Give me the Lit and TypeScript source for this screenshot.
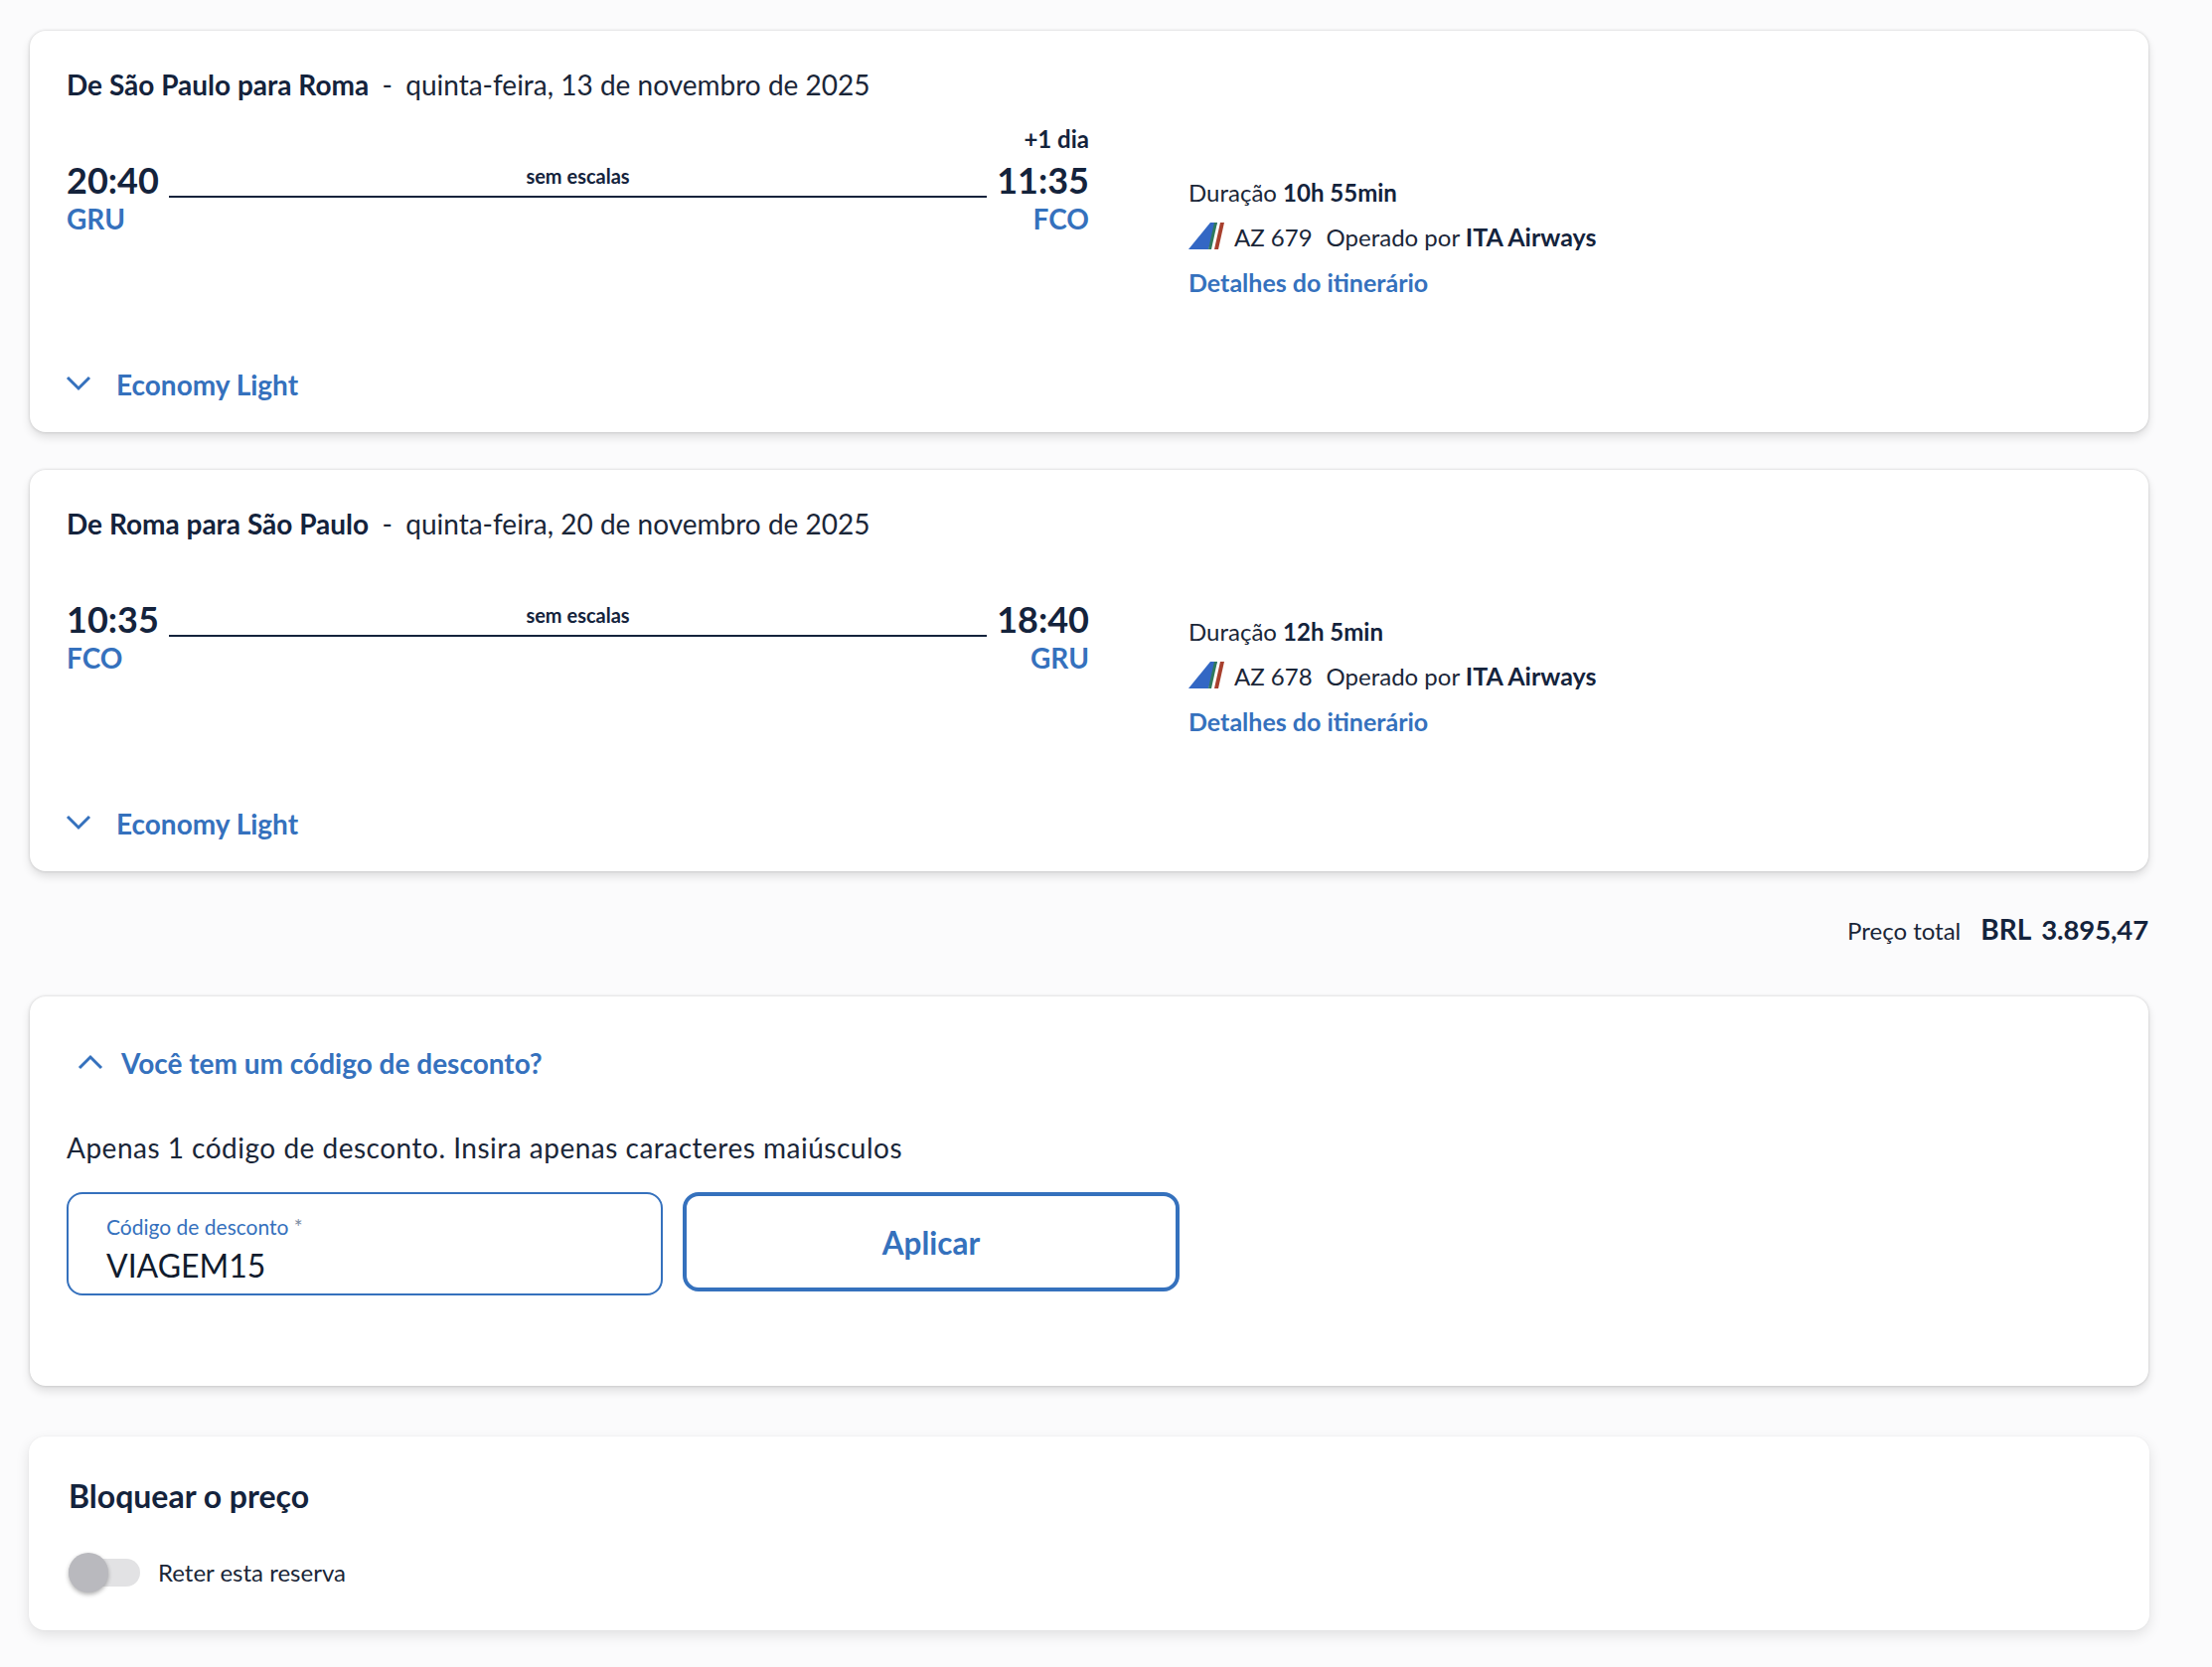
import { LitElement, html, css, svg } from "lit";
import { customElement } from "lit/decorators.js";

const tail = html`<svg class="tail" viewBox="0 0 36 28" width="36" height="28">
  <polygon points="0,28 22,1 29,1 20,28" fill="#3367c4"></polygon>
  <polygon points="20,28 26,1 29,1 23,28" fill="#2f7a5c"></polygon>
  <polygon points="26,28 32,1 36,1 30,28" fill="#a8402e"></polygon>
</svg>`;

const chevron = (up: boolean) => html`<svg class="chev" viewBox="0 0 26 16" width="26" height="16">
  ${svg`<polyline points=${up ? "2,14 13,3 24,14" : "2,2 13,13 24,2"} fill="none" stroke="#3571bd" stroke-width="3"></polyline>`}
</svg>`;

interface Leg {
  from: string; to: string; date: string; dep: string; arr: string; depCode: string; arrCode: string;
  plus?: string; dur: string; flight: string;
}

const legs: Leg[] = [
  { from: "São Paulo", to: "Roma", date: "quinta-feira, 13 de novembro de 2025", dep: "20:40", arr: "11:35", depCode: "GRU", arrCode: "FCO", plus: "+1 dia", dur: "10h 55min", flight: "AZ 679" },
  { from: "Roma", to: "São Paulo", date: "quinta-feira, 20 de novembro de 2025", dep: "10:35", arr: "18:40", depCode: "FCO", arrCode: "GRU", dur: "12h 5min", flight: "AZ 678" },
];

@customElement("app-root")
export class AppRoot extends LitElement {
  static styles = css`
    :host { display: block; min-height: 1678px; background: #fbfbfc; font-family: Lato, "Liberation Sans", sans-serif; color: #1a2638; box-sizing: border-box; padding: 31px 64px 0 30px; }
    * { box-sizing: border-box; }
    .card { background: #fff; border-radius: 16px; box-shadow: 0 0 3px rgba(0,0,0,.18), 0 5px 10px rgba(0,0,0,.12); }
    .leg { height: 404px; padding: 35px 37px 0; margin-bottom: 38px; display: flex; flex-direction: column; }
    .title { font-size: 28px; line-height: 38px; white-space: pre; }
    .title b { font-weight: 700; color: #14233c; }
    .title .sep { margin: 0 -1px; }
    .body { display: flex; margin-top: 21px; height: 225px; }
    .route { width: 1029px; }
    .plus { height: 34px; line-height: 30px; text-align: right; font-size: 24px; font-weight: 700; color: #14233c; }
    .times { display: flex; align-items: flex-end; height: 44px; }
    .time { font-size: 36px; font-weight: 700; line-height: 44px; color: #14233c; }
    .line { flex: 1; margin: 0 10px 4px; height: 40px; border-bottom: 2px solid #14233c; text-align: center; font-size: 20px; font-weight: 700; line-height: 37px; color: #14233c; }
    .codes { display: flex; justify-content: space-between; font-size: 28px; font-weight: 700; color: #3571bd; line-height: 36px; margin-top: -1px; }
    .info { margin-left: 100px; padding-top: 46px; font-size: 24px; line-height: 45px; }
    .info b { font-weight: 700; color: #14233c; }
    .flight { display: flex; align-items: center; white-space: pre; }
    .flight b { font-size: 25px; }
    .flight span { margin-right: 14px; }
    .tail { margin-right: 10px; margin-top: -4px; }
    .link { color: #3571bd; font-weight: 700; font-size: 25px; margin-top: 1px; }
    .fare { display: flex; align-items: center; margin-top: 18px; color: #3571bd; font-size: 28px; font-weight: 700; line-height: 38px; }
    .fare .chev { margin-left: -1px; margin-right: 25px; margin-top: -3px; }
    .total { display: flex; justify-content: flex-end; align-items: baseline; height: 91px; padding-top: 6px; margin-top: -3px; }
    .total .lbl { font-size: 24px; margin-right: 20px; }
    .total b { font-size: 28px; font-weight: 700; color: #14233c; display: flex; gap: 10px; align-items: baseline; }
    .total .num { letter-spacing: -.12px; font-size: 27.5px; }
    .promo { height: 392px; padding: 48px 37px 0; }
    .promo-head { display: flex; align-items: center; color: #3571bd; font-size: 28px; font-weight: 700; line-height: 38px; padding-left: 11px; }
    .promo-head .chev { margin-right: 18px; margin-top: -2px; }
    .hint { margin-top: 47px; font-size: 28px; line-height: 38px; letter-spacing: .5px; }
    .form { display: flex; gap: 20px; margin-top: 26px; align-items: flex-start; }
    .field { width: 600px; height: 104px; border: 2px solid #3571bd; border-radius: 16px; padding: 20px 38px 0; }
    .field label { display: block; font-size: 21px; line-height: 26px; color: #3571bd; }
    .field label i { font-style: normal; color: #7d8da3; }
    .field div { font-size: 32px; line-height: 44px; margin-top: 4px; color: #111c2e; }
    .apply { width: 500px; height: 100px; border: 4px solid #3571bd; border-radius: 16px; background: #fff; color: #3571bd; font: 700 31.5px Lato, sans-serif; padding: 2px 0 0; }
    .hold { height: 195px; margin: 51px -1px 0; padding: 38px 40px 0; box-shadow: 0 5px 14px rgba(0,0,0,.11), 0 0 2px rgba(0,0,0,.05); }
    .hold h2 { margin: 0; font-size: 32px; line-height: 44px; font-weight: 700; color: #14233c; }
    .toggle-row { display: flex; align-items: center; margin-top: 40px; }
    .toggle { position: relative; width: 72px; height: 28px; background: #e2e2e4; border-radius: 14px; margin-right: 18px; }
    .knob { position: absolute; left: 0; top: -6px; width: 40px; height: 40px; border-radius: 50%; background: #b9b9be; box-shadow: 0 2px 4px rgba(0,0,0,.3); }
    .toggle-row span { font-size: 24px; }
  `;

  private leg(l: Leg) {
    return html`<section class="card leg">
      <div class="title"><b>De ${l.from} para ${l.to}</b>  <span class="sep">-</span>  ${l.date}</div>
      <div class="body">
        <div class="route">
          <div class="plus">${l.plus ?? ""}</div>
          <div class="times"><span class="time">${l.dep}</span><div class="line">sem escalas</div><span class="time">${l.arr}</span></div>
          <div class="codes"><span>${l.depCode}</span><span>${l.arrCode}</span></div>
        </div>
        <div class="info">
          <div>Duração <b>${l.dur}</b></div>
          <div class="flight">${tail}<span>${l.flight}</span>Operado por <b>ITA Airways</b></div>
          <div class="link">Detalhes do itinerário</div>
        </div>
      </div>
      <div class="fare">${chevron(false)}Economy Light</div>
    </section>`;
  }

  render() {
    return html`
      ${legs.map((l) => this.leg(l))}
      <div class="total"><span class="lbl">Preço total</span><b><span>BRL</span><span class="num">3.895,47</span></b></div>
      <section class="card promo">
        <div class="promo-head">${chevron(true)}Você tem um código de desconto?</div>
        <div class="hint">Apenas 1 código de desconto. Insira apenas caracteres maiúsculos</div>
        <div class="form">
          <div class="field"><label>Código de desconto <i>*</i></label><div>VIAGEM15</div></div>
          <button class="apply">Aplicar</button>
        </div>
      </section>
      <section class="card hold">
        <h2>Bloquear o preço</h2>
        <div class="toggle-row"><div class="toggle"><div class="knob"></div></div><span>Reter esta reserva</span></div>
      </section>
    `;
  }
}
